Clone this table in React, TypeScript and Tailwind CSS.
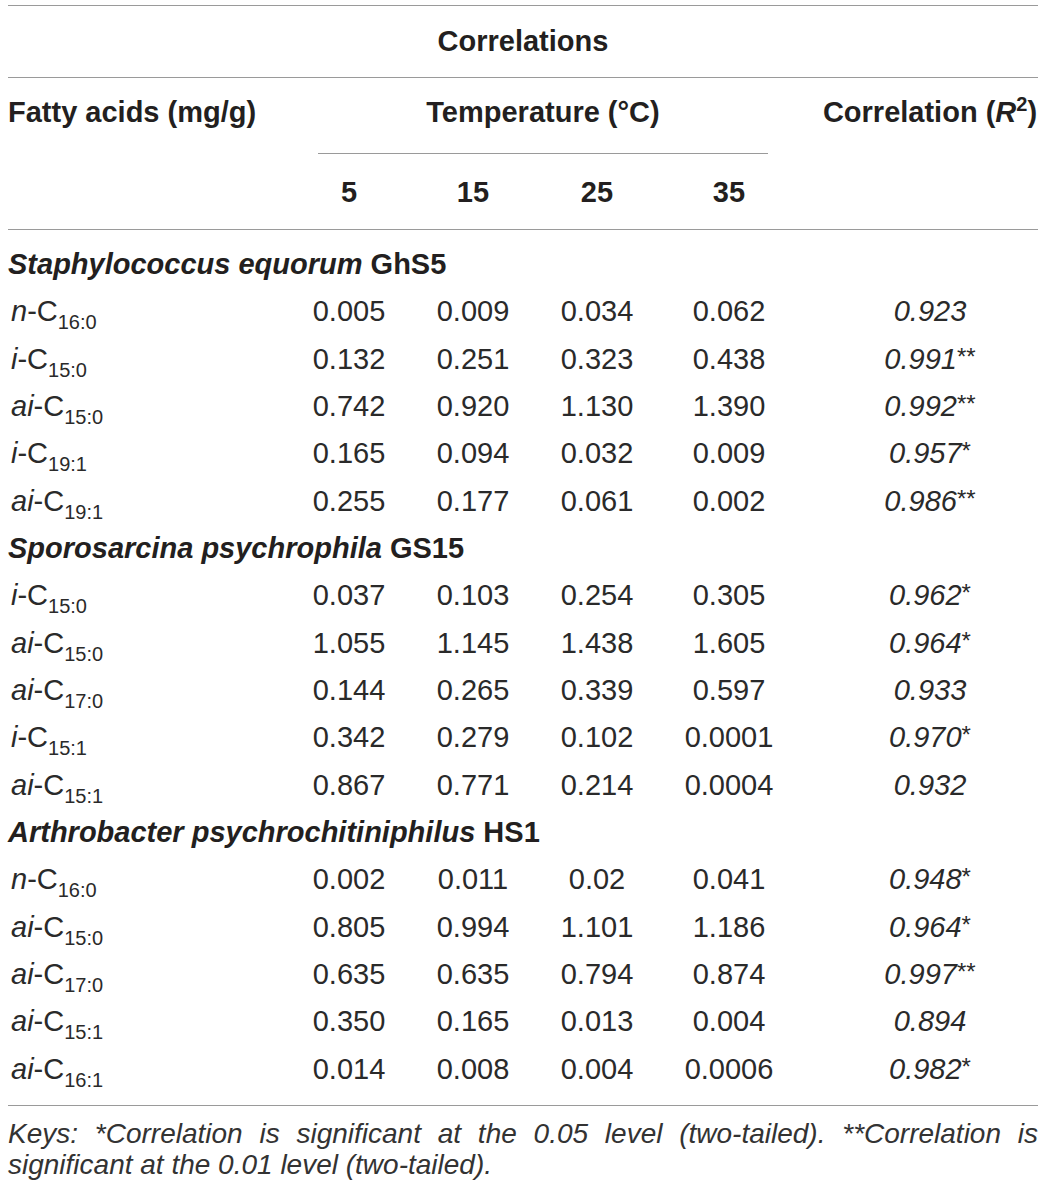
import React from "react";

type Row = { pre: string; sub: string; v: string[]; r: string; s: string };
type Group = { name: string; strain: string; rows: Row[] };

const groups: Group[] = [
  {
    name: "Staphylococcus equorum",
    strain: "GhS5",
    rows: [
      { pre: "n", sub: "16:0", v: ["0.005", "0.009", "0.034", "0.062"], r: "0.923", s: "" },
      { pre: "i", sub: "15:0", v: ["0.132", "0.251", "0.323", "0.438"], r: "0.991", s: "**" },
      { pre: "ai", sub: "15:0", v: ["0.742", "0.920", "1.130", "1.390"], r: "0.992", s: "**" },
      { pre: "i", sub: "19:1", v: ["0.165", "0.094", "0.032", "0.009"], r: "0.957", s: "*" },
      { pre: "ai", sub: "19:1", v: ["0.255", "0.177", "0.061", "0.002"], r: "0.986", s: "**" },
    ],
  },
  {
    name: "Sporosarcina psychrophila",
    strain: "GS15",
    rows: [
      { pre: "i", sub: "15:0", v: ["0.037", "0.103", "0.254", "0.305"], r: "0.962", s: "*" },
      { pre: "ai", sub: "15:0", v: ["1.055", "1.145", "1.438", "1.605"], r: "0.964", s: "*" },
      { pre: "ai", sub: "17:0", v: ["0.144", "0.265", "0.339", "0.597"], r: "0.933", s: "" },
      { pre: "i", sub: "15:1", v: ["0.342", "0.279", "0.102", "0.0001"], r: "0.970", s: "*" },
      { pre: "ai", sub: "15:1", v: ["0.867", "0.771", "0.214", "0.0004"], r: "0.932", s: "" },
    ],
  },
  {
    name: "Arthrobacter psychrochitiniphilus",
    strain: "HS1",
    rows: [
      { pre: "n", sub: "16:0", v: ["0.002", "0.011", "0.02", "0.041"], r: "0.948", s: "*" },
      { pre: "ai", sub: "15:0", v: ["0.805", "0.994", "1.101", "1.186"], r: "0.964", s: "*" },
      { pre: "ai", sub: "17:0", v: ["0.635", "0.635", "0.794", "0.874"], r: "0.997", s: "**" },
      { pre: "ai", sub: "15:1", v: ["0.350", "0.165", "0.013", "0.004"], r: "0.894", s: "" },
      { pre: "ai", sub: "16:1", v: ["0.014", "0.008", "0.004", "0.0006"], r: "0.982", s: "*" },
    ],
  },
];

const cols = "grid grid-cols-[279px_124px_124px_124px_140px_239px]";

export default function App() {
  return (
    <div
      className="w-[1046px] h-[1191px] bg-white pl-2 pt-[5px] text-[#231f20]"
      style={{ fontFamily: '"Liberation Sans", Arial, sans-serif' }}
    >
      <div className="w-[1030px]">
        <div className="border-t border-[#9a9a9a] h-[72px] flex items-center justify-center text-[29px] font-bold">
          Correlations
        </div>
        <div className="border-t border-[#9a9a9a]">
          <div className={`${cols} h-[76px] text-[29px] font-bold leading-[36px]`}>
            <div className="pt-[16px]">Fatty acids (mg/g)</div>
            <div className="col-span-4 pt-[16px] flex flex-col">
              <div className="text-center">Temperature (°C)</div>
              <div className="mt-auto ml-[31px] mr-[31px] border-b border-[#9a9a9a]"></div>
            </div>
            <div className="pt-[16px] pl-[23px] text-center">
              Correlation (<span className="italic">R</span>
              <span className="text-[20px] leading-[0] align-[11px] font-bold">2</span>)
            </div>
          </div>
          <div className={`${cols} h-[75px] items-center text-[29px] font-bold pt-[2px]`}>
            <div></div>
            <div className="text-center">5</div>
            <div className="text-center">15</div>
            <div className="text-center">25</div>
            <div className="text-center">35</div>
            <div></div>
          </div>
        </div>
        <div className="border-t border-[#9a9a9a] pt-[11px] pb-[12px] text-[29px]">
          {groups.map((g) => (
            <React.Fragment key={g.name}>
              <div className="h-[47.35px] flex items-center font-bold">
                <span className="italic">{g.name}</span>&nbsp;{g.strain}
              </div>
              {g.rows.map((r, i) => (
                <div key={i} className={`${cols} h-[47.35px] items-center text-[#2a2a2a]`}>
                  <div className="pl-[3px]">
                    <span className="italic">{r.pre}</span>-C
                    <span className="text-[20px] leading-[0] align-[-8px]">{r.sub}</span>
                  </div>
                  {r.v.map((v, j) => (
                    <div key={j} className="text-center">
                      {v}
                    </div>
                  ))}
                  <div className="pl-[23px] text-center">
                    <span className="italic">{r.r}</span>
                    {r.s && <span className="text-[24px] leading-[0] align-[4px]">{r.s}</span>}
                  </div>
                </div>
              ))}
            </React.Fragment>
          ))}
        </div>
        <div className="border-t border-[#9a9a9a] pt-[12px] text-[28px] leading-[31px] italic text-justify text-[#333]">
          Keys: *Correlation is significant at the 0.05 level (two-tailed). **Correlation is significant at the 0.01 level (two-tailed).
        </div>
      </div>
    </div>
  );
}
